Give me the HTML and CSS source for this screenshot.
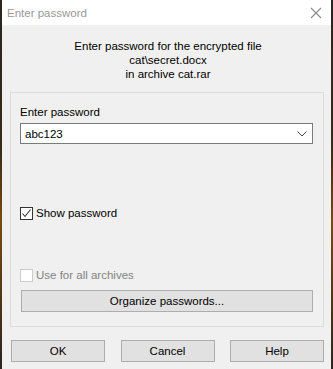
FILE: index.html
```html
<!DOCTYPE html>
<html>
<head>
<meta charset="utf-8">
<link rel="stylesheet" href="styles.css">
</head>
<body>
<div class="window">
  <div class="titlebar">
    <span class="title">Enter password</span>
    <svg class="close" width="12" height="12" viewBox="0 0 12 12"><path d="M1 1 L11 11 M11 1 L1 11" stroke="#8a8a8a" stroke-width="1.1" fill="none"/></svg>
  </div>
  <div class="content">
    <div class="message">
      <div>Enter password for the encrypted file</div>
      <div>cat\secret.docx</div>
      <div>in archive cat.rar</div>
    </div>
    <div class="group">
      <div class="label">Enter password</div>
      <div class="combo">
        <span class="value">abc123</span>
        <svg class="chev" width="10" height="6" viewBox="0 0 10 6"><path d="M0.5 0.5 L5 5 L9.5 0.5" stroke="#444" stroke-width="1" fill="none"/></svg>
      </div>
      <div class="check show">
        <span class="box checked"><svg width="11" height="11" viewBox="0 0 11 11"><path d="M1.5 5.5 L4 8.5 L9.5 1.5" stroke="#333" stroke-width="1.1" fill="none"/></svg></span>
        <span>Show password</span>
      </div>
      <div class="check all disabled">
        <span class="box"></span>
        <span>Use for all archives</span>
      </div>
      <div class="btn organize">Organize passwords...</div>
    </div>
    <div class="buttons">
      <div class="btn">OK</div>
      <div class="btn">Cancel</div>
      <div class="btn">Help</div>
    </div>
  </div>
</div>
</body>
</html>
```
FILE: styles.css
```css
*, *::before, *::after {
  box-sizing: border-box;
}
html, body {
  margin: 0;
  padding: 0;
}
body {
  width: 333px;
  height: 369px;
  overflow: hidden;
  background: linear-gradient(to bottom, #2a2622 0%, #3a2a18 40%, #7a4a10 60%, #2a2420 100%);
  font-family: "Liberation Sans", Arial, sans-serif;
  font-size: 11.5px;
  color: #000;
}
.window {
  margin-left: 2px;
  width: 329px;
  height: 369px;
  background: #f0f0f0;
  display: flex;
  flex-direction: column;
}
.titlebar {
  height: 25px;
  flex: none;
  background: #fff;
  display: flex;
  align-items: center;
  justify-content: space-between;
  padding: 0 9px 0 5px;
}
.title {
  color: #999;
  font-size: 11.5px;
}
.close {
  display: block;
}
.content {
  display: flex;
  flex-direction: column;
  padding: 14px 7px 0 8px;
}
.message {
  text-align: center;
  line-height: 14px;
  margin-left: 2px;
}
.group {
  margin-top: 11px;
  border: 1px solid #dcdcdc;
  height: 235px;
  padding: 12px 10px 0 9px;
  display: flex;
  flex-direction: column;
}
.label {
  line-height: 14px;
  margin-bottom: 4px;
}
.combo {
  height: 21px;
  border: 1px solid #7a7a7a;
  background: #fff;
  display: flex;
  align-items: center;
  justify-content: space-between;
  padding: 0 5px 0 4px;
}
.check {
  display: flex;
  align-items: center;
  gap: 3px;
  line-height: 14px;
}
.check.show {
  margin-top: 62px;
}
.check.all {
  margin-top: 48px;
}
.box {
  width: 13px;
  height: 13px;
  border: 1px solid #333;
  background: #fff;
  display: flex;
}
.disabled {
  color: #838383;
}
.disabled .box {
  border-color: #cccccc;
}
.btn {
  height: 22px;
  border: 1px solid #adadad;
  background: #e1e1e1;
  display: flex;
  align-items: center;
  justify-content: center;
}
.organize {
  margin-top: 8px;
  margin-left: 1px;
}
.buttons {
  margin-top: 13px;
  display: flex;
  justify-content: space-between;
  padding-left: 1px;
}
.buttons .btn {
  width: 94px;
}
```
